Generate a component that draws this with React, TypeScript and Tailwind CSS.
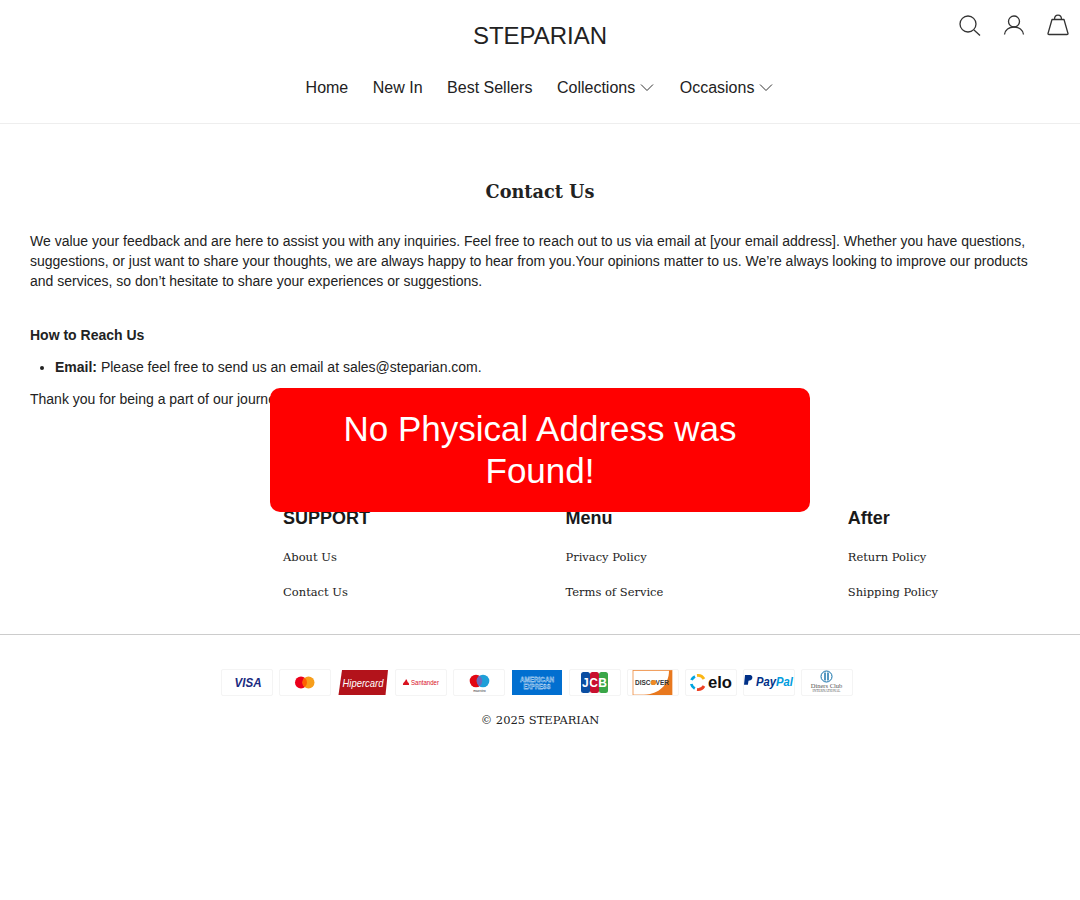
const sans = "font-['Liberation_Sans',Arial,sans-serif]";
const slab = "font-['DejaVu_Serif',serif]";

function Card({ children, plain }: { children: React.ReactNode; plain?: boolean }) {
  return (
    <div className={`w-[52px] h-[27px] shrink-0 rounded-[2px] overflow-hidden ${plain ? "" : "border border-[#f4f4f4]"}`}>
      <svg viewBox={plain ? "0 0 52 27" : "1 1 50 25"} width={plain ? 52 : 50} height={plain ? 27 : 25} className="block">
        {children}
      </svg>
    </div>
  );
}

function PaymentIcons() {
  return (
    <div className="flex justify-center gap-[6px] mr-[6px]">
      <Card>
        <text x="27" y="17.5" textAnchor="middle" fontSize="12" fontWeight="700" fontStyle="italic" fill="#1a2a80" fontFamily="Liberation Sans" textLength="27" lengthAdjust="spacingAndGlyphs">VISA</text>
      </Card>
      <Card>
        <circle cx="22" cy="13.5" r="6" fill="#eb001b" />
        <circle cx="29.5" cy="13.5" r="6" fill="#f79e1b" />
        <path d="M25.7 8.8a6 6 0 0 1 0 9.4a6 6 0 0 1 0-9.4z" fill="#ff5f00" />
      </Card>
      <Card plain>
        <path d="M5 1h46l-2.500 25H1.500z" fill="#b3131b" />
        <text x="26" y="18" textAnchor="middle" fontSize="10.500" fontStyle="italic" fill="#fff" fontFamily="Liberation Sans" textLength="41" lengthAdjust="spacingAndGlyphs">Hipercard</text>
      </Card>
      <Card>
        <path d="M8 16c-.5-2.500 2.500-3 3-6c1.500 1.500 1.500 2.500 1.500 3c1 .5 2 1.500 1.500 3z" fill="#d9121f" />
        <text x="30" y="16" textAnchor="middle" fontSize="7.500" fill="#d9121f" fontFamily="Liberation Sans" textLength="28" lengthAdjust="spacingAndGlyphs">Santander</text>
      </Card>
      <Card>
        <circle cx="23" cy="12" r="6.300" fill="#e30613" />
        <circle cx="30" cy="12" r="6.300" fill="#1f9fd8" />
        <path d="M26.500 6.800a6.300 6.300 0 0 1 0 10.400a6.300 6.300 0 0 1 0-10.400z" fill="#6c6bbd" />
        <text x="26.500" y="23" textAnchor="middle" fontSize="3.500" fill="#333" fontFamily="Liberation Sans">maestro</text>
      </Card>
      <Card plain>
        <rect x="1" y="1" width="50" height="25" fill="#016fd0" />
        <text x="26" y="12.500" textAnchor="middle" fontSize="8" fontWeight="700" fill="none" stroke="#fff" strokeWidth="0.350" fontFamily="Liberation Sans" textLength="34" lengthAdjust="spacingAndGlyphs">AMERICAN</text>
        <text x="26" y="20" textAnchor="middle" fontSize="8" fontWeight="700" fill="none" stroke="#fff" strokeWidth="0.350" fontFamily="Liberation Sans" textLength="27" lengthAdjust="spacingAndGlyphs">EXPRESS</text>
      </Card>
      <Card>
        <rect x="12" y="3" width="9" height="21" rx="2.500" fill="#0b4ea2" />
        <rect x="21" y="3" width="9" height="21" rx="2.500" fill="#c8102e" />
        <rect x="30" y="3" width="9" height="21" rx="2.500" fill="#3aa648" />
        <text x="25.500" y="18" textAnchor="middle" fontSize="12" fontWeight="700" fill="#fff" fontFamily="Liberation Sans" textLength="25" lengthAdjust="spacing">JCB</text>
      </Card>
      <Card>
        <rect x="6" y="1.500" width="39" height="24.500" fill="#fff" stroke="#ee8a3c" strokeWidth="0.800" />
        <path d="M45 1.500v24.500H17C32 25 42 16 42 1.500z" fill="#e8781e" />
        <text x="25" y="16" textAnchor="middle" fontSize="7.500" fontWeight="700" fill="#333" fontFamily="Liberation Sans" textLength="34" lengthAdjust="spacingAndGlyphs">DISCOVER</text>
        <circle cx="26.500" cy="13.500" r="2.600" fill="#f08a24" />
      </Card>
      <Card>
        <path d="M10 7.500a7 7 0 0 0-3.500 3.500" fill="none" stroke="#00a4e0" strokeWidth="2.800" />
        <path d="M6.300 15a7 7 0 0 0 3.500 4.500" fill="none" stroke="#00a4e0" strokeWidth="2.800" />
        <path d="M12 6.500a7 7 0 0 1 7 3.500" fill="none" stroke="#fbb615" strokeWidth="2.800" />
        <path d="M12 20.500a7 7 0 0 0 7-3.500" fill="none" stroke="#ee4023" strokeWidth="2.800" />
        <text x="35" y="19" textAnchor="middle" fontSize="17" fontWeight="700" fill="#111" fontFamily="Liberation Sans" textLength="24" lengthAdjust="spacingAndGlyphs">elo</text>
      </Card>
      <Card>
        <path d="M2 6h4.500c2.500 0 3.500 2 2.500 4c-.7 1.200-2 1.700-3.500 1.700l-.6 4H1z" fill="#003087" />
        <text x="13" y="17" fontSize="12" fontWeight="700" fontStyle="italic" fontFamily="Liberation Sans" textLength="37" lengthAdjust="spacingAndGlyphs">
          <tspan fill="#003087">Pay</tspan>
          <tspan fill="#009cde">Pal</tspan>
        </text>
      </Card>
      <Card>
        <circle cx="25.500" cy="7.500" r="5.500" fill="#fff" stroke="#0f6ea8" strokeWidth="1" />
        <path d="M24 3.500v8M27 3.500v8" stroke="#0f6ea8" strokeWidth="1.400" />
        <text x="25.500" y="19" textAnchor="middle" fontSize="6.500" fill="#555" fontFamily="Liberation Serif">Diners Club</text>
        <text x="25.500" y="23" textAnchor="middle" fontSize="3.500" fill="#555" fontFamily="Liberation Serif">INTERNATIONAL</text>
      </Card>
    </div>
  );
}

function FooterCol({ title, links }: { title: string; links: string[] }) {
  return (
    <div className="w-[282.4px] shrink-0">
      <h4 className={`${sans} text-[18px] leading-[20px] font-bold text-[#1a1a1a]`}>{title}</h4>
      <ul className="mt-[19px] mb-[1px] flex flex-col gap-[15px]">
        {links.map((l) => (
          <li key={l} className={`${slab} text-[11.5px] leading-[20px] text-[#222222]`}>{l}</li>
        ))}
      </ul>
    </div>
  );
}

function Chevron() {
  return (
    <svg width="16" height="16" viewBox="0 0 16 16" fill="none" stroke="#333" strokeWidth="1">
      <path d="M2 4.500L8 10.500l6-6" />
    </svg>
  );
}

export default function App() {
  return (
    <div className={`${sans} relative min-h-[900px] bg-white text-[#222222] overflow-hidden`}>
      <header className="h-[124px] border-b border-[#eeeeee]">
        <div className="grid grid-cols-[1fr_auto_1fr] h-[72px]">
          <div />
          <div className="pt-[21px] text-[24px] leading-[30px]">STEPARIAN</div>
          <div className="flex justify-end items-start gap-[20px] pt-[13px] pr-[10px]">
            <svg width="24" height="24" viewBox="0 0 24 24" fill="none" stroke="#333" strokeWidth="1.300">
              <circle cx="10" cy="11" r="8" />
              <path d="M16 17l6 5.500" />
            </svg>
            <svg width="24" height="24" viewBox="0 0 24 24" fill="none" stroke="#333" strokeWidth="1.300">
              <circle cx="12" cy="8.500" r="5.500" />
              <path d="M2.500 21.500c.5-4.500 4.500-7.500 9.500-7.500s9 3 9.500 7.500" />
            </svg>
            <svg width="24" height="24" viewBox="0 0 24 24" fill="none" stroke="#333" strokeWidth="1.300" strokeLinejoin="round">
              <path d="M6 6.500h12l4 14c.2.800-.3 1-1 1H3c-.7 0-1.200-.2-1-1z" />
              <path d="M8.500 6.500C8.500 3.500 10 2.200 12 2.200s3.500 1.300 3.500 4.300" />
            </svg>
          </div>
        </div>
        <nav className="flex justify-center items-center gap-[24.5px] text-[16px] leading-[32px]">
          <span>Home</span>
          <span>New In</span>
          <span>Best Sellers</span>
          <span className="flex items-center gap-[4px]">Collections <Chevron /></span>
          <span className="flex items-center gap-[4px]">Occasions <Chevron /></span>
        </nav>
      </header>

      <main className="px-[30px] pt-[53px] text-[14px] leading-[20px]">
        <h1 className={`${slab} text-center text-[17.7px] leading-[30px] font-bold`}>Contact Us</h1>
        <p className="mt-[24px]">
          We value your feedback and are here to assist you with any inquiries. Feel free to reach out to us via email at [your email address]. Whether you have questions, suggestions, or just want to share your thoughts, we are always happy to hear from you.Your opinions matter to us. We’re always looking to improve our products and services, so don’t hesitate to share your experiences or suggestions.
        </p>
        <p className="mt-[34px] font-bold">How to Reach Us</p>
        <ul className="mt-[12px] list-disc pl-[25px]">
          <li><strong>Email:</strong> Please feel free to send us an email at sales@steparian.com.</li>
        </ul>
        <p className="mt-[12px]">Thank you for being a part of our journey!</p>
      </main>

      <footer className="mt-[99px]">
        <div className="flex pl-[283px] pb-[31px] border-b border-[#cccccc]">
          <FooterCol title="SUPPORT" links={["About Us", "Contact Us"]} />
          <FooterCol title="Menu" links={["Privacy Policy", "Terms of Service"]} />
          <FooterCol title="After" links={["Return Policy", "Shipping Policy"]} />
        </div>
        <div className="pt-[34px]">
          <PaymentIcons />
          <p className={`${slab} mt-[14px] text-center text-[11.5px] leading-[20px]`}>© 2025 STEPARIAN</p>
        </div>
      </footer>

      <div className="absolute left-[270px] top-[388px] w-[540px] h-[124px] rounded-[10px] bg-[#ff0000] p-[20px] text-center text-white text-[35px] leading-[42px]">
        No Physical Address was Found!
      </div>
    </div>
  );
}
